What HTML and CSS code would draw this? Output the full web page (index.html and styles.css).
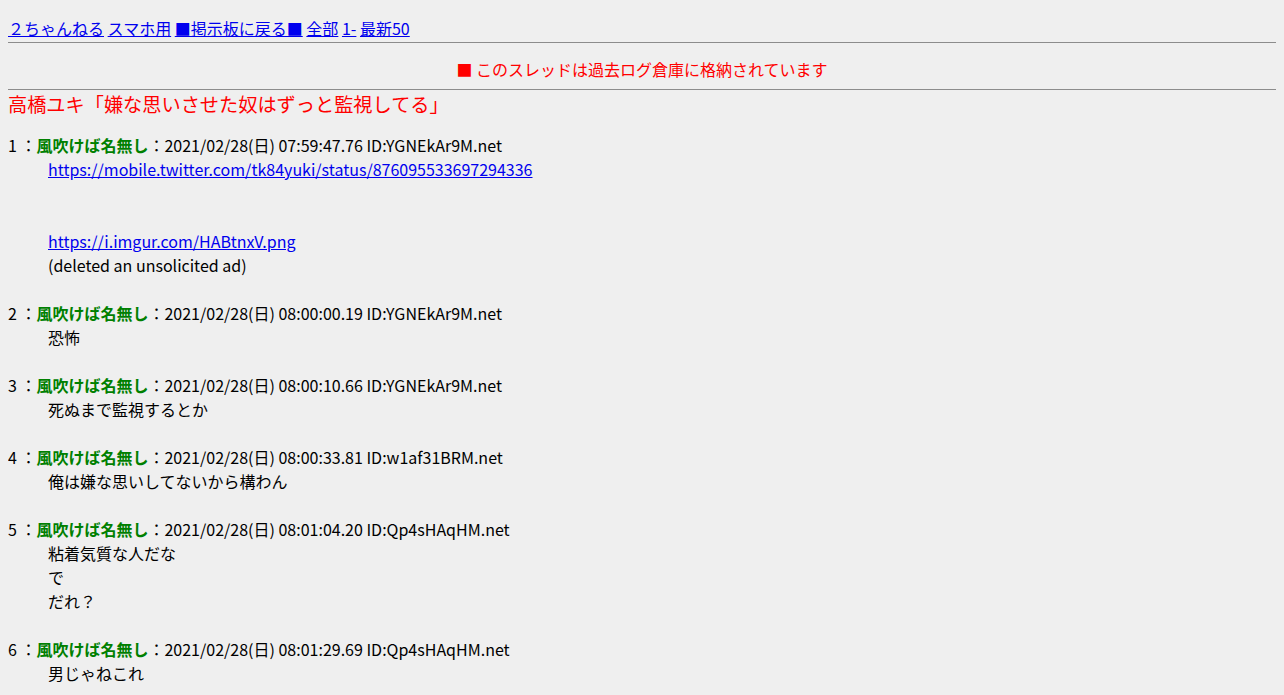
FILE: index.html
```html
<!DOCTYPE html>
<html lang="ja">
<head>
  <meta charset="UTF-8">
  <meta name="viewport" content="width=device-width, initial-scale=1.0">
  <title>高橋ユキ「嫌な思いさせた奴はずっと監視してる」</title>
  <link rel="stylesheet" href="styles.css">
</head>
<body>
  <div class="menu">
    <a href="#">２ちゃんねる</a> <a href="#">スマホ用</a> <a href="#">■掲示板に戻る■</a> <a href="#">全部</a> <a href="#">1-</a> <a href="#">最新50</a>
  </div>
  <hr class="rule rule-top">

  <div class="notice">■ このスレッドは過去ログ倉庫に格納されています</div>
  <hr class="rule rule-bottom">

  <h1 class="title">高橋ユキ「嫌な思いさせた奴はずっと監視してる」</h1>

  <dl class="thread">
    <dt>1 ：<b class="name">風吹けば名無し</b>：2021/02/28(日) 07:59:47.76 ID:YGNEkAr9M.net</dt>
    <dd><a href="#">https://mobile.twitter.com/tk84yuki/status/876095533697294336</a><br><br><br><a href="#">https://i.imgur.com/HABtnxV.png</a><br>(deleted an unsolicited ad)</dd>

    <dt>2 ：<b class="name">風吹けば名無し</b>：2021/02/28(日) 08:00:00.19 ID:YGNEkAr9M.net</dt>
    <dd>恐怖</dd>

    <dt>3 ：<b class="name">風吹けば名無し</b>：2021/02/28(日) 08:00:10.66 ID:YGNEkAr9M.net</dt>
    <dd>死ぬまで監視するとか</dd>

    <dt>4 ：<b class="name">風吹けば名無し</b>：2021/02/28(日) 08:00:33.81 ID:w1af31BRM.net</dt>
    <dd>俺は嫌な思いしてないから構わん</dd>

    <dt>5 ：<b class="name">風吹けば名無し</b>：2021/02/28(日) 08:01:04.20 ID:Qp4sHAqHM.net</dt>
    <dd>粘着気質な人だな<br>で<br>だれ？</dd>

    <dt>6 ：<b class="name">風吹けば名無し</b>：2021/02/28(日) 08:01:29.69 ID:Qp4sHAqHM.net</dt>
    <dd>男じゃねこれ</dd>
  </dl>
</body>
</html>
```

FILE: styles.css
```css
body {
  margin: 8px;
  background: #efefef;
  color: #000;
  font-family: "Noto Sans CJK JP", "Noto Sans", sans-serif;
  font-size: 16px;
  line-height: 24px;
}

a {
  color: #0000ee;
}

.menu {
  margin-top: 8px;
}

.rule {
  border: none;
  border-top: 1px solid #8c8c8c;
  height: 0;
  margin: 0;
}

.rule-top {
  margin-top: 2px;
}

.rule-bottom {
  margin-top: 8px;
}

.notice {
  margin-top: 14px;
  color: #ff0000;
  text-align: center;
}

.title {
  margin: 0 0 15px;
  font-size: 19.2px;
  font-weight: normal;
  line-height: 28px;
  color: #ff0000;
}

.thread {
  margin: 0;
}

.thread dt {
  margin: 0;
}

.thread dd {
  margin: 0 0 24px 40px;
}

.name {
  color: #008000;
}
```
